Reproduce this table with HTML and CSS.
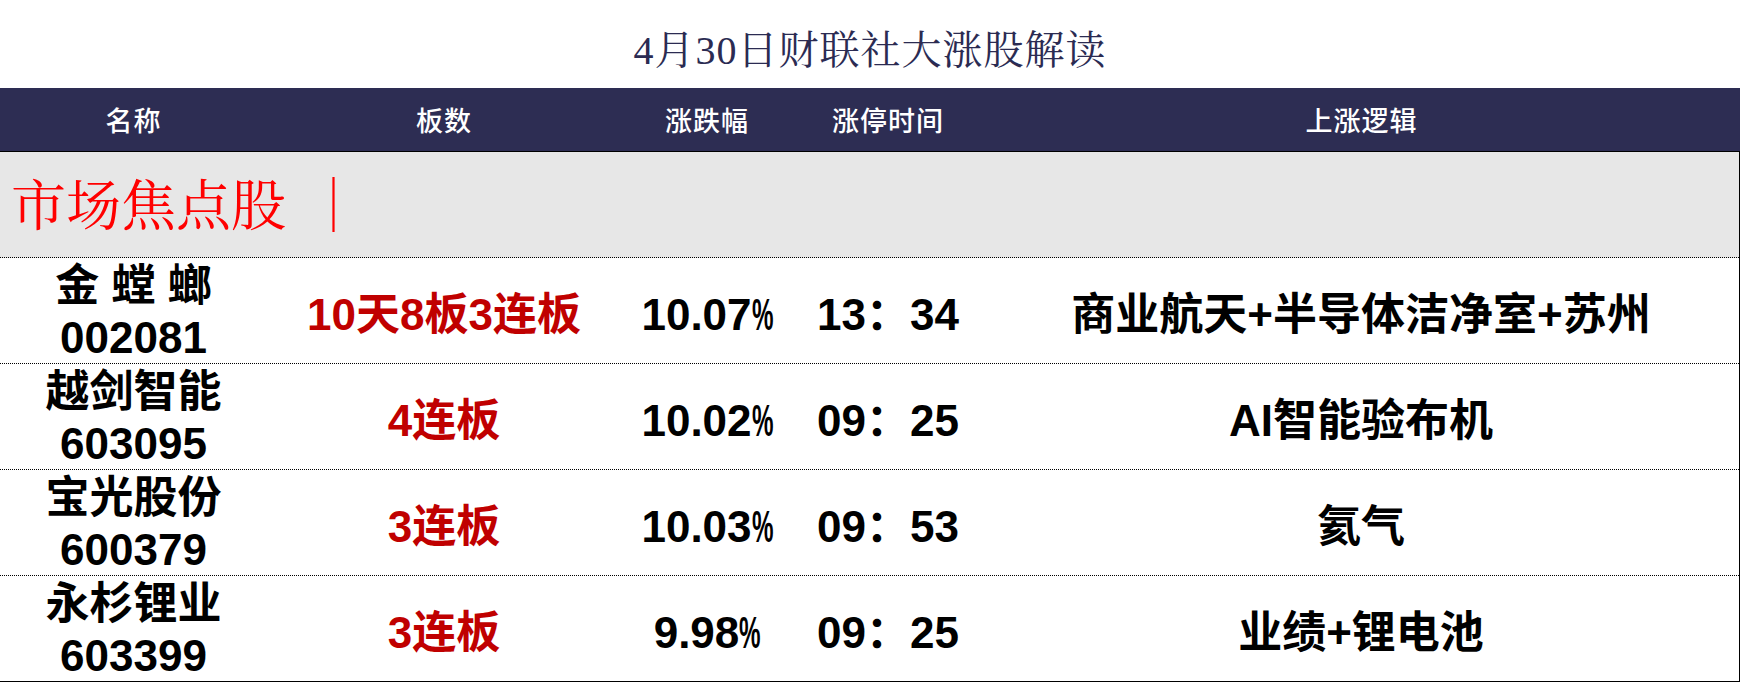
FILE: index.html
```html
<!DOCTYPE html>
<html lang="zh-CN">
<head>
<meta charset="utf-8">
<title>4月30日财联社大涨股解读</title>
<link rel="stylesheet" href="styles.css">
</head>
<body>
<div class="page">
  <h1 class="title">4月30日财联社大涨股解读</h1>
  <div class="table">
    <div class="thead">
      <div class="th">名称</div>
      <div class="th">板数</div>
      <div class="th">涨跌幅</div>
      <div class="th">涨停时间</div>
      <div class="th">上涨逻辑</div>
    </div>
    <div class="tbody">
      <div class="section">市场焦点股<span class="bar">｜</span></div>
      <div class="row">
        <div class="cell name"><span>金 螳 螂</span><span>002081</span></div>
        <div class="cell boards">10天8板3连板</div>
        <div class="cell">10.07<span class="pct">%</span></div>
        <div class="cell">13：34</div>
        <div class="cell">商业航天+半导体洁净室+苏州</div>
      </div>
      <div class="row">
        <div class="cell name"><span>越剑智能</span><span>603095</span></div>
        <div class="cell boards">4连板</div>
        <div class="cell">10.02<span class="pct">%</span></div>
        <div class="cell">09：25</div>
        <div class="cell">AI智能验布机</div>
      </div>
      <div class="row">
        <div class="cell name"><span>宝光股份</span><span>600379</span></div>
        <div class="cell boards">3连板</div>
        <div class="cell">10.03<span class="pct">%</span></div>
        <div class="cell">09：53</div>
        <div class="cell">氦气</div>
      </div>
      <div class="row last">
        <div class="cell name"><span>永杉锂业</span><span>603399</span></div>
        <div class="cell boards">3连板</div>
        <div class="cell">9.98<span class="pct">%</span></div>
        <div class="cell">09：25</div>
        <div class="cell">业绩+锂电池</div>
      </div>
    </div>
  </div>
</div>
</body>
</html>
```
FILE: styles.css
```css
html, body {
  margin: 0;
  padding: 0;
  background: #ffffff;
}

.page {
  width: 1740px;
  height: 682px;
  overflow: hidden;
}

.title {
  margin: 0;
  height: 88px;
  box-sizing: border-box;
  padding-top: 26px;
  text-align: center;
  font-family: "Liberation Serif", "Noto Serif CJK SC", serif;
  font-weight: 400;
  font-size: 40px;
  line-height: 50px;
  letter-spacing: 1px;
  color: #2b2b52;
}

.table {
  display: flex;
  flex-direction: column;
}

.thead {
  display: grid;
  grid-template-columns: 267px 354px 172px 190px 1fr;
  height: 63px;
  background: #2d2d53;
  border-bottom: 1px solid #000;
  align-items: center;
}

.th {
  text-align: center;
  color: #ffffff;
  font-family: "Noto Sans CJK SC", sans-serif;
  font-size: 27px;
  font-weight: 500;
  line-height: 32px;
  letter-spacing: 1px;
}

.tbody {
  border-right: 1px solid #000;
  border-bottom: 1px solid #000;
}

.section {
  height: 105px;
  background: #e7e7e7;
  border-bottom: 1px dotted #000;
  box-sizing: border-box;
  display: flex;
  align-items: center;
  padding-left: 11px;
  padding-top: 4px;
  font-family: "Liberation Serif", "Noto Serif CJK SC", serif;
  font-size: 55px;
  line-height: 60px;
  color: #ff0000;
  white-space: pre;
}

.section {
  height: 106px;
}

.bar {
  margin-left: 20px;
}

.row {
  display: grid;
  grid-template-columns: 267px 354px 172px 190px 1fr;
  height: 105px;
  border-bottom: 1px dotted #000;
  align-items: center;
}

.row.last {
  border-bottom: none;
}

.cell {
  text-align: center;
  font-family: "Liberation Sans", "Noto Sans CJK SC", sans-serif;
  font-weight: 700;
  font-size: 44px;
  line-height: 52px;
  color: #000;
  white-space: nowrap;
  padding-top: 8px;
}

.cell.name {
  display: flex;
  flex-direction: column;
  align-items: center;
  padding-top: 2px;
}

.cell.boards {
  color: #c00000;
}

.pct {
  display: inline-block;
  width: 21px;
  transform-origin: left center;
  transform: scaleX(0.55);
}
```
